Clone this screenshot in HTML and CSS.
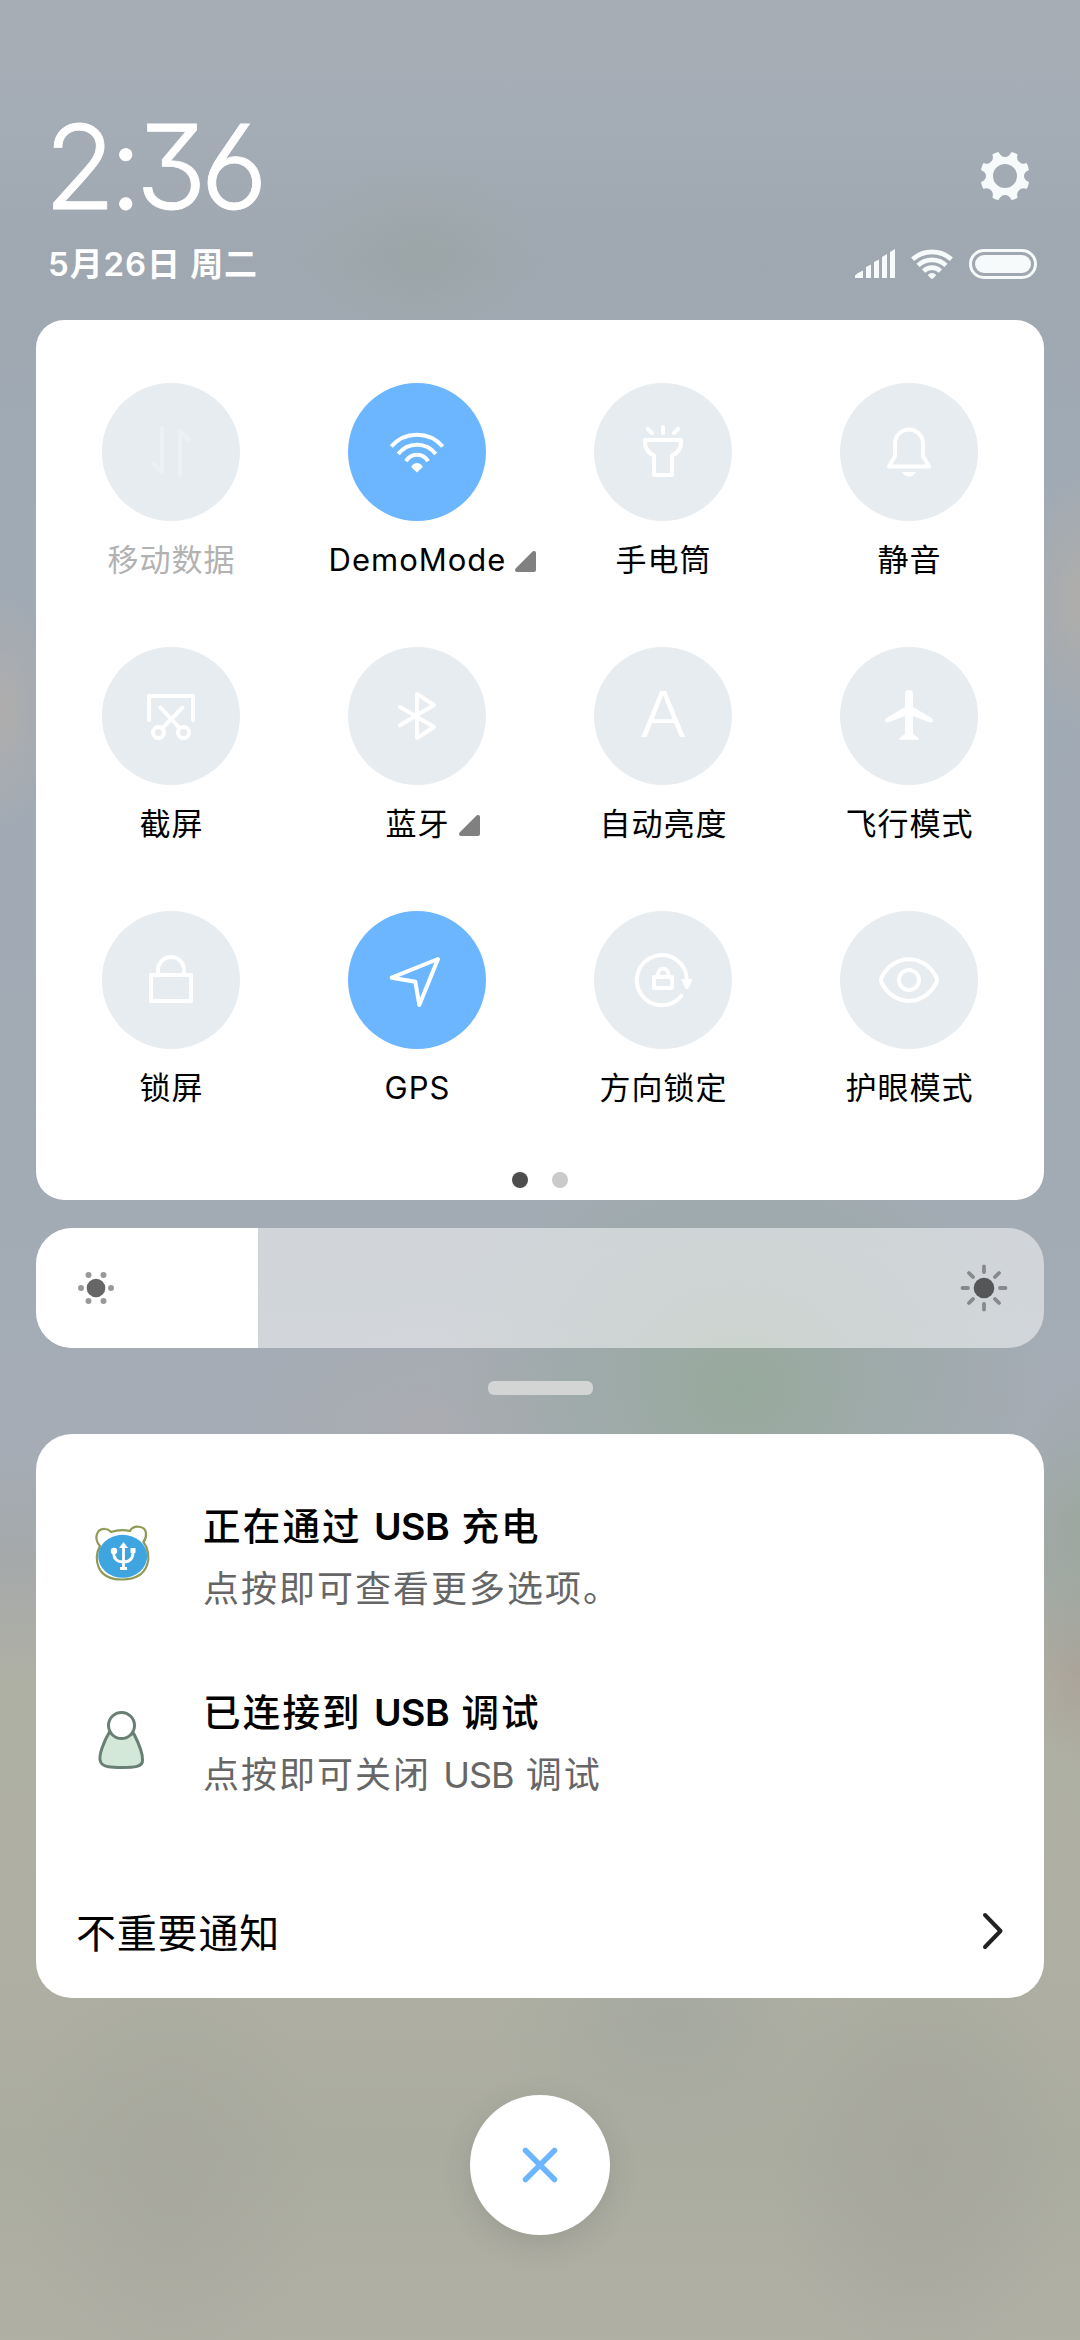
FILE: index.html
```html
<!DOCTYPE html>
<html lang="zh-CN">
<head>
<meta charset="utf-8">
<title>控制中心</title>
<link rel="stylesheet" href="styles.css">
</head>
<body>
<header class="header">
  <div class="header-left">
    <div class="clock"><span>2</span><span class="colon">:</span><span>3</span><span>6</span></div>
    <div class="date">5月26日 周二</div>
  </div>
  <div class="header-right">
    <svg class="gear" viewBox="-25 -25 50 50"><path fill-rule="evenodd" d="M-6.500-24 Q-10-23.500-12.700-21.500 Q-10.500-16-16-12.700 Q-19-11.500-21.500-13 Q-23.500-10-24-6 Q-19-4-19 0 Q-19 4-24 6 Q-23.500 10-21.500 13 Q-19 11.500-16 12.700 Q-10.500 16-12.700 21.500 Q-10 23.500-6.500 24 Q-4 19 0 19 Q4 19 6.500 24 Q10 23.500 12.700 21.500 Q10.500 16 16 12.700 Q19 11.500 21.500 13 Q23.500 10 24 6 Q19 4 19 0 Q19-4 24-6 Q23.500-10 21.500-13 Q19-11.500 16-12.700 Q10.500-16 12.700-21.500 Q10-23.500 6.500-24 Q4-19 0-19 Q-4-19-6.500-24Z M12 0A12 12 0 1 0-12 0A12 12 0 1 0 12 0Z"/></svg>
    <div class="status">
      <svg class="signal" viewBox="0 0 40 29"><path d="M0 29V26.500L3 24L8 21.500V29Z M11 29V18L16 15.500V29Z M19 29V13L24 10.500V29Z M27 29V8L32 5V29Z M35 29V3L40 0V29Z"/></svg>
      <svg class="wifi" viewBox="0 0 42 30"><g fill="none" stroke="#f7fafa" stroke-width="4.600"><path d="M1.600 10.300A29 29 0 0 1 40.400 10.300"/><path d="M7 16.400A20.500 20.500 0 0 1 35 16.400"/><path d="M12.600 22.100A12 12 0 0 1 29.400 22.100"/></g><path d="M17 26.500Q17.500 24 21 24Q24.500 24 25 26.500L22 29.600Q21 30.400 20 29.600Z"/></svg>
      <svg class="battery" viewBox="0 0 68 30"><rect x="1.500" y="1.500" width="65" height="27" rx="13.500" fill="none" stroke="#f7fafa" stroke-width="3"/><rect x="6" y="6" width="56" height="18" rx="9"/></svg>
    </div>
  </div>
</header>

<main>
<section class="tiles-card">
  <div class="tiles">
    <div class="tile disabled"><div class="disc"><svg viewBox="0 0 138 138"><path d="M60 45V89L51.500 80.500M78 92V48L86.500 56.500"/></svg></div><div class="label">移动数据</div></div>
    <div class="tile on"><div class="disc"><svg viewBox="0 0 138 138"><path class="flat" d="M43.300 63.500A33.900 33.900 0 0 1 94.700 63.500M50.300 71A23.500 23.500 0 0 1 87.700 71M58 78.300A12.500 12.500 0 0 1 80 78.300"/><path class="solid" d="M63.500 82.800Q66 80 69 80Q72 80 74.500 82.800L74.300 84.500L69 89.500L63.700 84.500Z"/></svg></div><div class="label latin">DemoMode<svg class="more" viewBox="0 0 21 21"><path d="M19 2V19H2Z"/></svg></div></div>
    <div class="tile"><div class="disc"><svg viewBox="0 0 138 138"><path d="M51 57H87C87.500 65 84 70 78 72.500V92H60V72.500C54 70 50.500 65 51 57ZM69 44V50M53.800 45.800L58 50M84.200 45.800L80 50"/></svg></div><div class="label">手电筒</div></div>
    <div class="tile"><div class="disc"><svg viewBox="0 0 138 138"><path d="M55 60.500A14 14 0 0 1 83 60.500V73L89 83.500H49L55 73Z"/><path class="solid" d="M62 89H76Q73.500 93.500 69 93.500Q64.500 93.500 62 89Z"/></svg></div><div class="label">静音</div></div>

    <div class="tile"><div class="disc"><svg viewBox="0 0 138 138"><path d="M47 73V49H91V73M58.500 60.500L78 81.500M80.500 60.500L60 81.500"/><circle cx="56.500" cy="85.500" r="5.500"/><circle cx="81.500" cy="85.500" r="5.500"/></svg></div><div class="label">截屏</div></div>
    <div class="tile"><div class="disc"><svg viewBox="0 0 138 138"><path d="M52 60L86 80L69 91V47L86 58L52 78.300"/></svg></div><div class="label">蓝牙<svg class="more" viewBox="0 0 21 21"><path d="M19 2V19H2Z"/></svg></div></div>
    <div class="tile"><div class="disc auto"><span>A</span></div><div class="label">自动亮度</div></div>
    <div class="tile"><div class="disc"><svg viewBox="0 0 138 138"><path class="solid" d="M65 60V47Q65 43 69 43Q73 43 73 47V60L91.500 71Q93.500 72.500 93 74.300Q92 76 89.500 75.200L73 69V87L78.500 91Q79.500 92.700 77.500 92.700H60.500Q58.500 92.700 59.500 91L65 87V69L48.500 75.200Q46 76 45 74.300Q44.500 72.500 46.500 71Z"/></svg></div><div class="label">飞行模式</div></div>

    <div class="tile"><div class="disc"><svg viewBox="0 0 138 138"><rect x="49" y="64" width="40" height="26"/><path d="M56 63V59A13 13 0 0 1 82 59V63"/></svg></div><div class="label">锁屏</div></div>
    <div class="tile on"><div class="disc"><svg viewBox="0 0 138 138"><path d="M90 48L43.700 66.700L67.300 70.700L71.300 94Z"/></svg></div><div class="label latin">GPS</div></div>
    <div class="tile"><div class="disc"><svg viewBox="0 0 138 138"><path d="M87.400 84.700A25 25 0 1 1 92.800 69"/><path class="solid" d="M87 68H98.700L94.500 77.500Q93 79 91.500 77.500Z"/><rect x="60" y="66" width="18" height="11"/><path d="M64 66V63A5.200 5.200 0 0 1 74.400 63V66"/></svg></div><div class="label">方向锁定</div></div>
    <div class="tile"><div class="disc"><svg viewBox="0 0 138 138"><path d="M41.500 66.500C54 42 84 42 96.500 66.500Q97.500 69 96.500 71.500C84 96 54 96 41.500 71.500Q40.500 69 41.500 66.500Z"/><circle cx="69" cy="69" r="10"/></svg></div><div class="label">护眼模式</div></div>
  </div>
  <div class="pager"><i class="current"></i><i></i></div>
</section>

<section class="slider">
  <div class="slider-fill">
    <svg class="sun" viewBox="-24 -24 48 48"><circle r="9.300" fill="#666"/><g fill="#999"><circle cx="15" r="3"/><circle cx="-15" r="3"/><circle cx="7.500" cy="-13" r="3"/><circle cx="-7.500" cy="-13" r="3"/><circle cx="7.500" cy="13" r="3"/><circle cx="-7.500" cy="13" r="3"/></g></svg>
  </div>
  <svg class="sun" viewBox="-24 -24 48 48"><circle r="10.300" fill="#555657"/><path stroke="#87898b" stroke-width="3.800" stroke-linecap="round" d="M0-16V-21.500M0 16V21.500M-16 0H-21.500M16 0H21.500M11-11L15-15M-11-11L-15-15M11 11L15 15M-11 11L-15 15"/></svg>
</section>
<div class="handle"></div>

<section class="notices">
  <article class="notice">
    <svg viewBox="0 0 60 60"><path fill="#fff" stroke="#8e9a56" stroke-width="2.200" d="M7 22C0 14 4 4.500 12 5C16 5 17 7 18 8Q27 5 37 7C40 1 52 1 53 9Q53.500 14 50.500 18C60 31 57 55 30 55.500C3 56 0 34 7 22Z"/><ellipse cx="29.700" cy="32.300" rx="24.500" ry="21.500" fill="#3ea5e1"/><path fill="none" stroke="#fff" stroke-width="2.800" d="M30.500 21V44M20.500 26.500V29Q21 38 30.500 38Q40 38 40 28V25"/><path fill="#fff" d="M26 24L30.500 18L35 24ZM27 43H34V46H27Z"/><circle cx="21" cy="27" r="3.200" fill="#fff"/><path fill="#fff" d="M37.500 24H42.500V29H37.500Z"/></svg>
    <div><h2>正在通过 <b>USB</b> 充电</h2><p>点按即可查看更多选项。</p></div>
  </article>
  <article class="notice">
    <svg viewBox="0 0 60 60"><g stroke="#6a7f74" stroke-width="3"><path fill="#d3e8d8" d="M17 21C11 31 5 46 7.500 51.500C9 57.500 20 57.500 29 57.500C41 57.500 50 57 49.500 50C50 43 44 30 41 24Z"/><circle cx="28.500" cy="15.500" r="13" fill="#fff"/></g></svg>
    <div><h2>已连接到 <b>USB</b> 调试</h2><p>点按即可关闭 <b>USB</b> 调试</p></div>
  </article>
  <div class="minor"><span>不重要通知</span><svg viewBox="0 0 22 38"><path d="M3 3L18.500 19L3 35"/></svg></div>
</section>
</main>

<button class="clear" aria-label="清除"><svg viewBox="0 0 40 40"><path d="M5.500 5.500L34.500 34.500M34.500 5.500L5.500 34.500"/></svg></button>
</body>
</html>
```
FILE: styles.css
```css
* { box-sizing: border-box; margin: 0; padding: 0; }
svg { display: block; }

body {
  width: 1080px;
  height: 2340px;
  overflow: hidden;
  display: flex;
  flex-direction: column;
  font-family: Inter, "Noto Sans CJK SC", sans-serif;
  color: #000;
  background:
    radial-gradient(ellipse 300px 260px at 740px 1390px, rgba(148,168,150,.8), rgba(148,168,150,.35) 50%, rgba(148,168,150,0)),
    radial-gradient(ellipse 180px 130px at 430px 1430px, rgba(176,171,173,.5), rgba(176,171,173,0)),
    radial-gradient(ellipse 60px 130px at 1080px 600px, rgba(175,173,170,1), rgba(175,173,170,0)),
    radial-gradient(ellipse 60px 120px at 0 710px, rgba(175,173,172,1), rgba(175,173,172,0)),
    radial-gradient(ellipse 70px 150px at 1080px 1530px, rgba(154,167,156,.8), rgba(154,167,156,0)),
    radial-gradient(ellipse 60px 100px at 1080px 1670px, rgba(169,160,151,.8), rgba(169,160,151,0)),
    radial-gradient(ellipse 120px 90px at 420px 255px, rgba(153,164,161,.6), rgba(153,164,161,0)),
    radial-gradient(ellipse 180px 130px at 670px 2020px, rgba(164,168,160,.8), rgba(164,168,160,0)),
    radial-gradient(ellipse 150px 240px at 170px 2180px, rgba(165,165,156,.6), rgba(165,165,156,0)),
    radial-gradient(ellipse 150px 240px at 920px 2160px, rgba(163,163,155,.7), rgba(163,163,155,0)),
    linear-gradient(#a6adb5 0, #a4acb5 120px, #9fa8b0 260px, #a0aab5 450px, #a2abb4 1200px, #a5acb5 1450px, #a5a9aa 1560px, #afb0a4 1680px, #aeafa2 2000px, #abaca0 2150px, #b0b0a5 2340px);
}

.header {
  height: 320px;
  padding: 108px 43px 0 48px;
  display: flex;
  justify-content: space-between;
}
.clock {
  height: 116px;
  margin-left: -4px;
  display: flex;
  font-size: 117px;
  font-weight: 300;
  line-height: 117px;
  color: #fff;
  font-feature-settings: "cv09", "cv03";
  letter-spacing: -6.500px;
  -webkit-text-stroke: .8px #fff;
}
.date {
  margin-top: 21px;
  font-size: 33px;
  font-weight: 600;
  line-height: 38px;
  letter-spacing: .9px;
  color: #fff;
  white-space: nowrap;
}
.header-right {
  display: flex;
  flex-direction: column;
  align-items: flex-end;
  fill: #f7fafa;
}
.gear { width: 50px; height: 50px; margin: 43px 7px 48px 0; }
.status { display: flex; gap: 16px; }
.signal { width: 40px; height: 29px; }
.wifi { width: 42px; height: 30px; }
.battery { width: 68px; height: 30px; }

main { padding: 0 36px; }
.tiles-card {
  height: 880px;
  padding: 63px 12px 0;
  border-radius: 28px;
  background: #fff;
}
.tiles {
  display: grid;
  grid-template-columns: repeat(4, 246px);
  grid-auto-rows: 264px;
}
.tile { display: flex; flex-direction: column; align-items: center; }
.disc {
  width: 138px;
  height: 138px;
  border-radius: 50%;
  background: #e7ecf0;
  fill: none;
  stroke: #fff;
  stroke-width: 4;
  stroke-linecap: round;
  stroke-linejoin: round;
}
.on .disc { background: #6bb6ff; }
.disabled svg { opacity: .3; }
.solid { fill: #fff; stroke: none; }
.flat { stroke-linecap: butt; }
.auto {
  font-size: 63px;
  font-weight: 300;
  line-height: 134px;
  text-align: center;
  color: #fff;
}
.auto span { display: inline-block; transform: scaleX(1.12); }
.label {
  position: relative;
  margin-top: 19px;
  padding-left: 1px;
  font-size: 31px;
  line-height: 40px;
  letter-spacing: 1px;
  white-space: nowrap;
}
.disabled .label { color: #b2b2b2; }
.more {
  position: absolute;
  left: calc(100% + 9px);
  top: 11px;
  width: 21px;
  height: 21px;
  fill: #808080;
  stroke: #808080;
  stroke-width: 4;
  stroke-linejoin: round;
}
.pager { display: flex; justify-content: center; gap: 24px; margin-top: -3px; }
.pager i { width: 16px; height: 16px; border-radius: 50%; background: #cacaca; }
.pager .current { background: #4d4d4d; }

.slider {
  height: 120px;
  margin-top: 28px;
  padding-right: 36px;
  display: flex;
  align-items: center;
  justify-content: space-between;
  overflow: hidden;
  border-radius: 36px;
  background: rgba(255,255,255,.5);
}
.slider-fill {
  width: 222px;
  height: 120px;
  padding-left: 36px;
  display: flex;
  align-items: center;
  background: #fff;
}
.sun { width: 48px; height: 48px; }
.handle {
  width: 105px;
  height: 14px;
  margin: 33px auto 39px;
  border-radius: 6px;
  background: #d2d5d4;
}

.notices {
  height: 564px;
  padding: 65px 40px 0;
  border-radius: 36px;
  background: #fff;
}
.notice { height: 186px; display: flex; gap: 50px; }
.notice > svg { width: 60px; height: 60px; margin: 25px 0 0 17px; }
.notice h2 {
  font-size: 37.500px;
  font-weight: 500;
  line-height: 56px;
  letter-spacing: 2.200px;
}
.notice p {
  margin-top: 4px;
  font-size: 36px;
  line-height: 60px;
  letter-spacing: 2px;
  color: #666;
}
.notice b { font-weight: inherit; letter-spacing: 0; }
.notice h2 b { font-weight: 600; letter-spacing: -.5px; }
.notice p b { letter-spacing: -1px; }
.minor {
  height: 60px;
  margin-top: 30px;
  display: flex;
  align-items: center;
  justify-content: space-between;
  font-size: 40px;
  letter-spacing: .8px;
}
.minor svg {
  width: 22px;
  height: 38px;
  fill: none;
  stroke: #222;
  stroke-width: 4;
  stroke-linecap: round;
  stroke-linejoin: round;
}

.clear {
  width: 140px;
  height: 140px;
  margin: 97px auto 0;
  display: grid;
  place-items: center;
  border: 0;
  border-radius: 50%;
  background: #fff;
  box-shadow: 0 8px 28px rgba(80,80,70,.18);
}
.clear svg {
  width: 40px;
  height: 40px;
  fill: none;
  stroke: #6bb6ff;
  stroke-width: 5.500;
  stroke-linecap: round;
}
```
